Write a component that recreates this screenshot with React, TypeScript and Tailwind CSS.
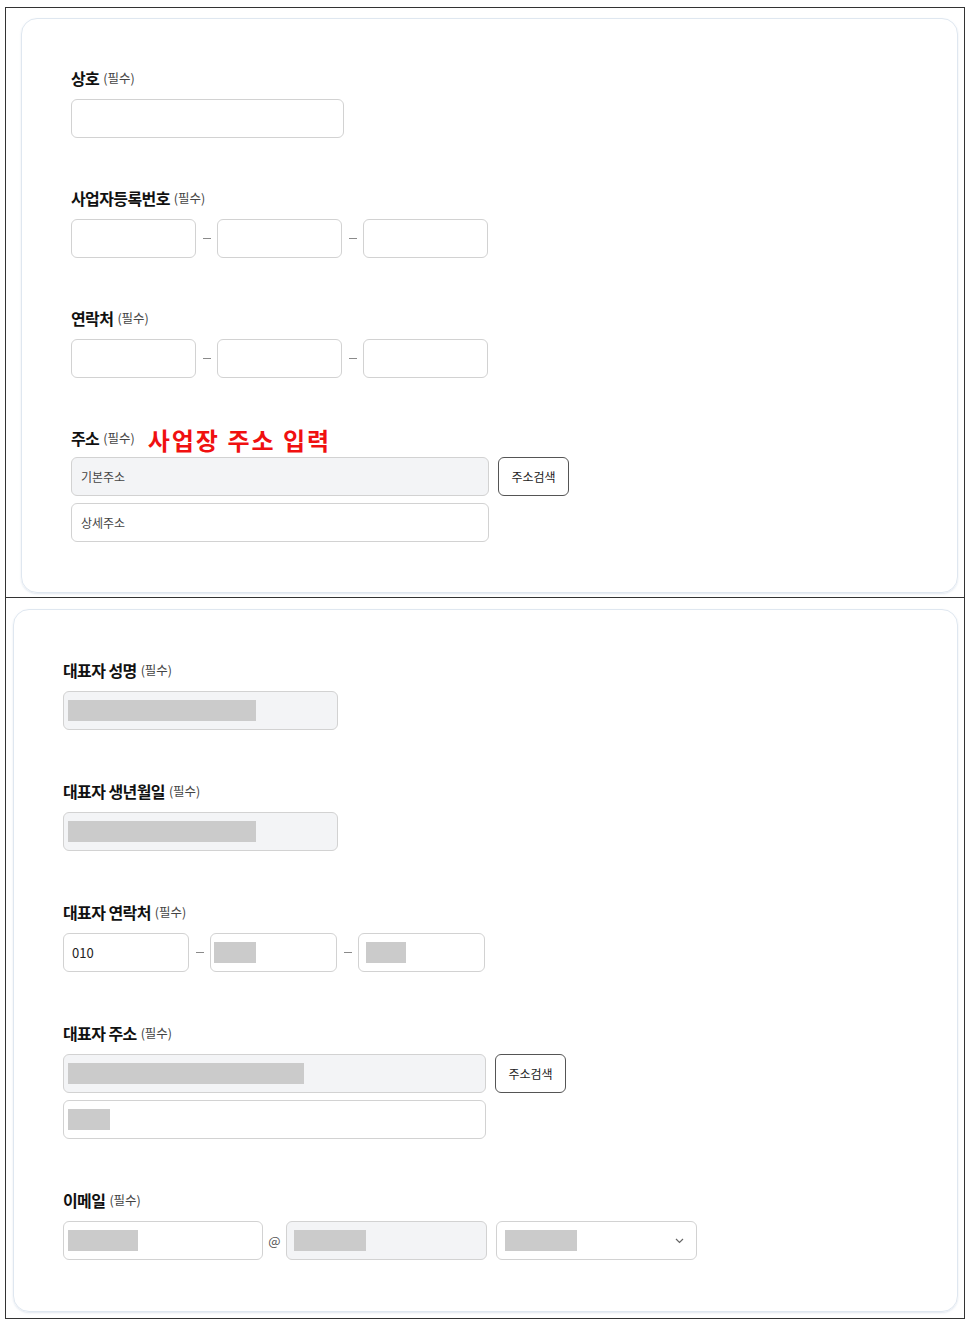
import React from "react";

const F = { fontFamily: '"Noto Sans CJK KR", "Noto Sans", sans-serif' };

function Label({ text }: { text: string }) {
  return (
    <div className="flex items-center h-[20px] mb-[11px] whitespace-nowrap">
      <span className="text-[16px] font-bold text-[#111] tracking-[-0.6px] leading-[20px]">{text}</span>
      <span className="ml-[4px] text-[12.5px] text-[#444] leading-[20px]">(필수)</span>
    </div>
  );
}

function Box({
  w,
  gray,
  children,
  className = "",
}: {
  w: string;
  gray?: boolean;
  children?: React.ReactNode;
  className?: string;
}) {
  return (
    <div
      className={`${w} h-[39px] rounded-[6px] border border-[#d2d2d2] flex items-center ${
        gray ? "bg-[#f3f4f6]" : "bg-white"
      } ${className}`}
    >
      {children}
    </div>
  );
}

function Redact({ w }: { w: string }) {
  return <div className={`${w} h-[21px] bg-[#cbcbcb]`} />;
}

function Dash() {
  return (
    <div className="w-[21px] flex justify-center">
      <div className="w-[8px] h-[1px] bg-[#8a8a8a]" />
    </div>
  );
}

function Btn() {
  return (
    <div className="w-[71px] h-[39px] rounded-[6px] border border-[#555] bg-white flex items-center justify-center text-[12px] text-[#222]">
      주소검색
    </div>
  );
}

export default function App() {
  return (
    <div style={F} className="bg-white w-[976px] min-h-[1326px] pt-[7px] pl-[5px]">
      <div className="w-[960px]">
        {/* Frame 1 */}
        <div className="border border-[#333] h-[591px] pl-[15px] pr-[6px] pt-[10px] pb-[4px]">
          <div className="h-full rounded-[16px] border border-[#dfe7f0] shadow-[0_1px_2px_rgba(180,195,215,0.4)] pl-[49px] pt-[49px]">
            <div className="mb-[50px]">
              <Label text="상호" />
              <Box w="w-[273px]" />
            </div>
            <div className="mb-[50px]">
              <Label text="사업자등록번호" />
              <div className="flex items-center">
                <Box w="w-[125px]" />
                <Dash />
                <Box w="w-[125px]" />
                <Dash />
                <Box w="w-[125px]" />
              </div>
            </div>
            <div className="mb-[50px]">
              <Label text="연락처" />
              <div className="flex items-center">
                <Box w="w-[125px]" />
                <Dash />
                <Box w="w-[125px]" />
                <Dash />
                <Box w="w-[125px]" />
              </div>
            </div>
            <div>
              <div className="flex items-center h-[20px] mb-[9px] whitespace-nowrap">
                <span className="text-[16px] font-bold text-[#111] tracking-[-0.6px] leading-[20px]">주소</span>
                <span className="ml-[4px] text-[12.5px] text-[#444] leading-[20px]">(필수)</span>
                <span className="ml-[13px] text-[24px] font-bold text-[#f01010] leading-[20px] tracking-[2px] relative top-[2px]">
                  사업장 주소 입력
                </span>
              </div>
              <div className="flex items-center gap-[9px]">
                <Box w="w-[418px]" gray className="pl-[9px] text-[12px] text-[#444]">
                  기본주소
                </Box>
                <Btn />
              </div>
              <Box w="w-[418px]" className="mt-[7px] pl-[9px] text-[12px] text-[#444]">
                상세주소
              </Box>
            </div>
          </div>
        </div>

        {/* Frame 2 */}
        <div className="border border-t-0 border-[#333] h-[721px] pl-[7px] pr-[6px] pt-[11px] pb-[6px]">
          <div className="h-full rounded-[16px] border border-[#dfe7f0] shadow-[0_1px_2px_rgba(180,195,215,0.4)] pl-[49px] pt-[50px]">
            <div className="mb-[51px]">
              <Label text="대표자 성명" />
              <Box w="w-[275px]" gray className="pl-[4px]">
                <Redact w="w-[188px]" />
              </Box>
            </div>
            <div className="mb-[51px]">
              <Label text="대표자 생년월일" />
              <Box w="w-[275px]" gray className="pl-[4px]">
                <Redact w="w-[188px]" />
              </Box>
            </div>
            <div className="mb-[51px]">
              <Label text="대표자 연락처" />
              <div className="flex items-center">
                <Box w="w-[126px]" className="pl-[8px] text-[13px] text-[#222]">
                  010
                </Box>
                <Dash />
                <Box w="w-[127px]" className="pl-[3px]">
                  <Redact w="w-[42px]" />
                </Box>
                <Dash />
                <Box w="w-[127px]" className="pl-[7px]">
                  <Redact w="w-[40px]" />
                </Box>
              </div>
            </div>
            <div className="mb-[51px]">
              <Label text="대표자 주소" />
              <div className="flex items-center gap-[9px]">
                <Box w="w-[423px]" gray className="pl-[4px]">
                  <Redact w="w-[236px]" />
                </Box>
                <Btn />
              </div>
              <Box w="w-[423px]" className="mt-[7px] pl-[4px]">
                <Redact w="w-[42px]" />
              </Box>
            </div>
            <div>
              <Label text="이메일" />
              <div className="flex items-center">
                <Box w="w-[200px]" className="pl-[4px]">
                  <Redact w="w-[70px]" />
                </Box>
                <div className="w-[23px] flex justify-center text-[13px] text-[#555]">@</div>
                <Box w="w-[201px]" gray className="pl-[7px]">
                  <Redact w="w-[72px]" />
                </Box>
                <div className="w-[9px]" />
                <Box w="w-[201px]" className="pl-[8px] pr-[12px] justify-between">
                  <Redact w="w-[72px]" />
                  <svg width="9" height="6" viewBox="0 0 9 6" fill="none">
                    <path d="M1 1l3.5 3.5L8 1" stroke="#666" strokeWidth="1.2" />
                  </svg>
                </Box>
              </div>
            </div>
          </div>
        </div>
      </div>
    </div>
  );
}
